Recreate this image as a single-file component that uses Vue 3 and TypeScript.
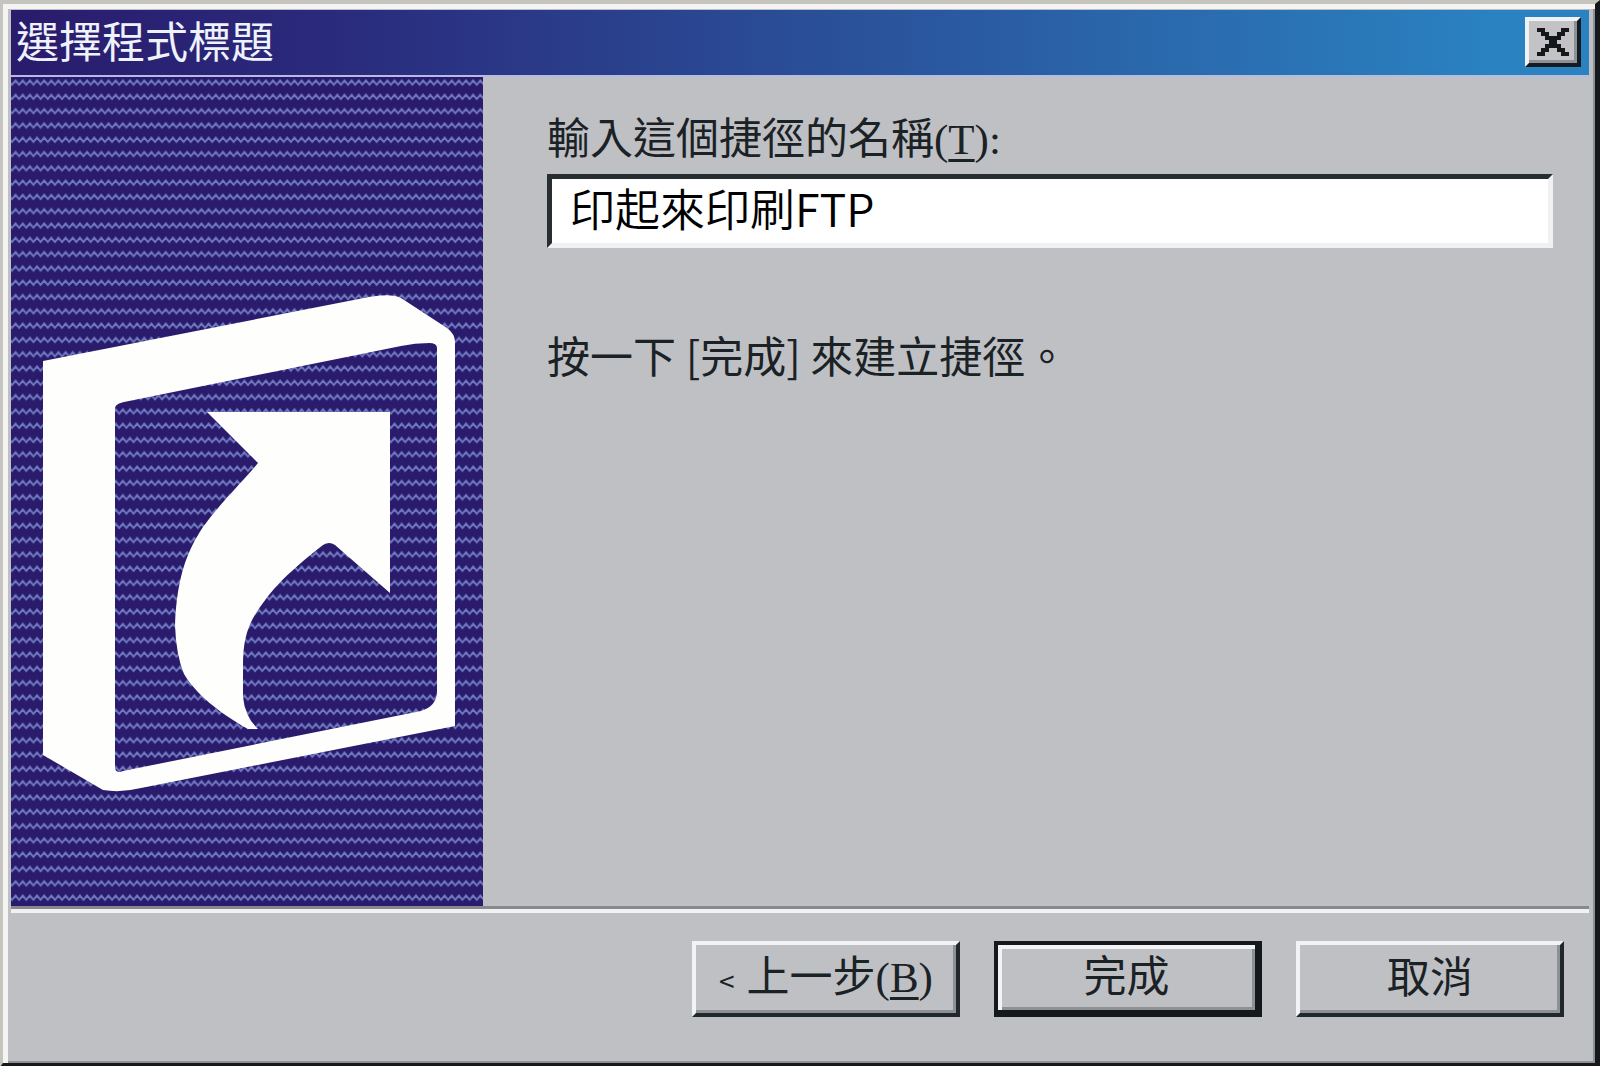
<script setup lang="ts">
import { ref } from 'vue'

const shortcutName = ref('印起來印刷FTP')
</script>

<template>
  <main class="dialog">
    <header class="titlebar">
      <h1 class="title">選擇程式標題</h1>
      <button class="close" type="button" aria-label="關閉">
        <svg viewBox="0 0 8 7" aria-hidden="true">
          <path d="M0 0h2v1h1v1h2V1h1V0h2v1H7v1H6v1H5v1h1v1h1v1h1v1H6V6H5V5H3v1H2v1H0V6h1V5h1V4h1V3H2V2H1V1H0z" />
        </svg>
      </button>
    </header>

    <div class="content">
      <aside class="banner">
        <svg viewBox="0 0 472 829" preserveAspectRatio="xMidYMid slice" aria-hidden="true">
          <defs>
            <pattern id="weave" width="2" height="4" patternUnits="userSpaceOnUse" patternTransform="translate(1 2) scale(3.575)">
              <rect width="2" height="4" fill="#2a1b6c" />
              <path d="M-1 .4L0 1.6L1 .4L2 1.6L3 .4" fill="none" stroke="#6f79c0" stroke-width=".55" />
            </pattern>
          </defs>
          <rect width="472" height="829" fill="url(#weave)" />
          <path
            fill="#fefefd"
            fill-rule="evenodd"
            d="M32 284L358 220Q380 216 390 221L436 251Q444 257 444 265V649L130 711Q110 716 92 713L32 678ZM104 331V690Q104 697 112 694L410 634Q426 629 426 614V271Q426 266 418 266Q404 266 390 269L118 324Q104 326 104 331Z"
          />
          <path
            fill="#fefefd"
            d="M196 335H379V516L324 468Q318 464 312 468C286 488 264 508 252 526C235 548 232 565 232 590V620Q234 640 247 652H237C208 636 184 616 173 597Q165 578 164 548C166 500 176 474 192 450C208 428 228 408 242 392L247 386Z"
          />
        </svg>
      </aside>

      <section class="form">
        <label for="shortcut-name">輸入這個捷徑的名稱<span class="key">(<u>T</u>):</span></label>
        <input id="shortcut-name" v-model="shortcutName" type="text" />
        <p>按一下 [完成] 來建立捷徑。</p>
      </section>
    </div>

    <footer class="actions">
      <button class="action" type="button"><span class="arrow">&lt;</span>上一步<span class="key">(<u>B</u>)</span></button>
      <button class="action default" type="button">完成</button>
      <button class="action" type="button">取消</button>
    </footer>
  </main>
</template>

<style>
body {
  margin: 0;
  background: #bfc0c4;
}
</style>

<style scoped>
.dialog {
  box-sizing: border-box;
  display: flex;
  flex-direction: column;
  min-height: 100vh;
  padding: 6px 6px 0 1px;
  border: solid;
  border-width: 4px 5px 4px 3px;
  border-color: #c6c5bd #14181b #14181b #c6c5bd;
  background: #bfc0c4;
  box-shadow: inset 5px 5px #f4f4f5, inset -2px -2px #8d9094;
  color: #1b2226;
  font-family: 'Noto Sans CJK TC', sans-serif;
  font-size: 43px;
  line-height: 56px;
}

.titlebar {
  display: flex;
  align-items: flex-start;
  justify-content: space-between;
  height: 67px;
  margin-left: 7px;
  padding: 7px 8px 0 5px;
  box-sizing: border-box;
  border-bottom: 2px solid #b4bce4;
  background: linear-gradient(90deg, #2a1b6c, #2a2a7c 20%, #2a82c0 94%);
}

.title {
  margin: 0;
  color: #eef2fb;
  font-size: 43px;
  font-weight: 400;
  line-height: 44px;
}

.close {
  display: flex;
  align-items: center;
  justify-content: center;
  width: 56px;
  height: 50px;
  padding: 0;
  border: solid;
  border-width: 4px;
  border-color: #eff3f6 #151b22 #151b22 #eff3f6;
  background: #c3c3c6;
  box-shadow: inset -3px -3px #8d9094;
}

.close svg {
  width: 32px;
  height: 28px;
  fill: #15181b;
}

.content {
  display: flex;
  flex: 1;
  margin-left: 7px;
  border-bottom: 3px solid #86898d;
}

.banner {
  flex: 0 0 472px;
  background: #2a1b6c;
}

.banner svg {
  display: block;
  width: 100%;
  height: 100%;
}

.form {
  display: flex;
  flex: 1;
  flex-direction: column;
  min-width: 0;
  padding: 30px 36px 0 64px;
}

.key {
  font-family: 'Liberation Serif', serif;
}

u {
  text-decoration-thickness: 3px;
  text-underline-offset: 5px;
}

input {
  box-sizing: border-box;
  width: 100%;
  height: 74px;
  margin: 6px 0 78px;
  padding: 0 18px 8px;
  border: solid;
  border-width: 5px;
  border-color: #272e32 #f1f1f3 #f1f1f3 #272e32;
  border-radius: 0;
  outline: 0;
  background: #fff;
  color: #000;
  font: 350 45px/56px 'Noto Sans CJK TC DemiLight', 'Noto Sans CJK TC', sans-serif;
}

p {
  margin: 0;
}

.actions {
  display: flex;
  justify-content: flex-end;
  gap: 34px;
  height: 154px;
  box-sizing: border-box;
  margin-left: 7px;
  padding: 28px 25px 0 0;
  border-top: 4px solid #f1f1f3;
}

.action {
  box-sizing: border-box;
  width: 268px;
  height: 76px;
  padding: 0 0 10px;
  border: solid;
  border-width: 4px;
  border-color: #f3f3f5 #20282c #20282c #f3f3f5;
  background: #bfc0c4;
  box-shadow: inset -3px -3px #8d9094;
  color: inherit;
  font: inherit;
  white-space: nowrap;
}

.default {
  border-width: 4px 7px 7px 4px;
  border-color: #15191c;
  box-shadow: inset 4px 4px #f3f3f5, inset -3px -3px #8d9094;
}

.arrow {
  margin-right: 12px;
  font-size: 28px;
}
</style>
